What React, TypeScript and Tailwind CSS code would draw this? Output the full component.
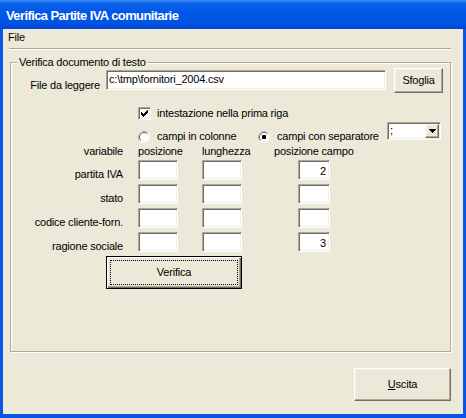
import React from "react";

const sunken =
  "border border-t-[#aca899] border-l-[#aca899] border-r-white border-b-white shadow-[inset_1px_1px_0_#716f64,inset_-1px_-1px_0_#f1efe2] bg-white";
const raised =
  "border border-t-white border-l-white border-r-[#716f64] border-b-[#716f64] shadow-[inset_-1px_-1px_0_#aca899,inset_1px_1px_0_#f1efe2] bg-[#ece9d8]";

function Check() {
  const cols: [number, number][] = [
    [3, 5],
    [4, 6],
    [5, 7],
    [6, 6],
    [7, 5],
    [8, 4],
    [9, 3],
  ];
  return (
    <div className={`w-[13px] h-[13px] ${sunken}`}>
      <svg width="11" height="11" viewBox="0 0 11 11" shapeRendering="crispEdges">
        {cols.map(([x, y]) => (
          <rect key={x} x={x - 1} y={y - 1} width="1" height="3" fill="#000" />
        ))}
      </svg>
    </div>
  );
}

function Radio({ checked }: { checked?: boolean }) {
  return (
    <svg width="12" height="12" viewBox="0 0 12 12" className="shrink-0">
      <circle cx="6" cy="6" r="5.5" fill="#fff" stroke="#fff" />
      <path d="M2.11 9.89 A5.5 5.5 0 0 1 9.89 2.11" fill="none" stroke="#aca899" />
      <circle cx="6" cy="6" r="4.5" fill="#fff" stroke="#f1efe2" />
      <path d="M2.82 9.18 A4.5 4.5 0 0 1 9.18 2.82" fill="none" stroke="#716f64" />
      {checked && <rect x="4" y="4" width="4" height="4" rx="0.8" fill="#000" />}
    </svg>
  );
}

function Row({ label, value }: { label: string; value?: string }) {
  return (
    <div className="flex items-start h-[20px]">
      <div className="w-[112px] text-right mt-[8px] whitespace-nowrap">{label}</div>
      <div className={`ml-[15px] w-[40px] h-[20px] ${sunken}`}></div>
      <div className={`ml-[24px] w-[40px] h-[20px] ${sunken}`}></div>
      <div className={`ml-[56px] w-[32px] h-[20px] ${sunken} text-right pt-[4px] pr-[3px]`}>{value}</div>
    </div>
  );
}

export default function App() {
  return (
    <div className="w-[466px] h-[418px] flex flex-col bg-[#0a55e6] overflow-hidden font-['Liberation_Sans',Arial,sans-serif] text-[11px] leading-[13px] tracking-[-0.2px] text-black">
      <div className="h-[29px] shrink-0 flex items-center pl-[6px] pt-[2px] bg-[linear-gradient(180deg,#3d8ff6_0%,#0a62ec_12%,#0057e7_45%,#0055e5_78%,#0045d0_100%)] text-white font-bold text-[13px] tracking-[-0.6px] whitespace-nowrap">
        Verifica Partite IVA comunitarie
      </div>
      <div className="flex-1 mx-[3px] mb-[4px] bg-[#ece9d8] flex flex-col">
        <div className="h-[19px] flex items-center pl-[5px] pb-[2px]">File</div>
        <div className="ml-[6px] mr-[12px] border-t border-t-[#aca899] border-b border-b-white"></div>

        <div className="relative mt-[12px] ml-[7px] w-[441px] h-[290px] border border-[#aca899] shadow-[1px_1px_0_#fff,inset_1px_1px_0_#fff] flex flex-col">
          <div className="absolute left-[6px] top-[-7px] px-[2px] bg-[#ece9d8] whitespace-nowrap">
            Verifica documento di testo
          </div>

          <div className="mt-[5px] flex items-start h-[25px]">
            <div className="w-[89px] text-right mt-[11px] whitespace-nowrap">File da leggere</div>
            <div className={`ml-[6px] mt-[2px] w-[280px] h-[20px] ${sunken} pt-[2px] pl-[2px] whitespace-nowrap`}>
              {"c:\\tmp\\fornitori_2004.csv"}
            </div>
            <div className={`ml-[8px] w-[49px] h-[25px] ${raised} flex items-center justify-center`}>Sfoglia</div>
          </div>

          <div className="mt-[14px] flex items-center h-[13px] pl-[127px]">
            <Check />
            <div className="ml-[6px] whitespace-nowrap">intestazione nella prima riga</div>
          </div>

          <div className="mt-[2px] flex items-start h-[20px] pl-[127px]">
            <div className="w-[120px] mt-[8px] h-[13px] flex items-center">
              <Radio />
              <div className="ml-[7px] whitespace-nowrap">campi in colonne</div>
            </div>
            <div className="w-[129px] mt-[8px] h-[13px] flex items-center">
              <Radio checked />
              <div className="ml-[7px] whitespace-nowrap">campi con separatore</div>
            </div>
            <div className={`w-[54px] h-[18px] ${sunken} flex p-[1px]`}>
              <div className="flex-1 pl-[1px] overflow-hidden">;</div>
              <div className={`w-[14px] h-full ${raised} flex items-center justify-center`}>
                <svg width="7" height="4" viewBox="0 0 7 4" shapeRendering="crispEdges">
                  <rect x="0" y="0" width="7" height="1" fill="#000" />
                  <rect x="1" y="1" width="5" height="1" fill="#000" />
                  <rect x="2" y="2" width="3" height="1" fill="#000" />
                  <rect x="3" y="3" width="1" height="1" fill="#000" />
                </svg>
              </div>
            </div>
          </div>

          <div className="mt-[3px] flex h-[13px] whitespace-nowrap">
            <div className="w-[112px] text-right">variabile</div>
            <div className="ml-[15px] w-[64px]">posizione</div>
            <div className="w-[72px]">lunghezza</div>
            <div>posizione campo</div>
          </div>

          <div className="mt-[2px] flex flex-col gap-[4px]">
            <Row label="partita IVA" value="2" />
            <Row label="stato" />
            <Row label="codice cliente-forn." />
            <Row label="ragione sociale" value="3" />
          </div>

          <div className="mt-[4px] ml-[95px] w-[136px] h-[33px] border border-black shadow-[inset_1px_1px_0_#fff,inset_-1px_-1px_0_#716f64,inset_-2px_-2px_0_#aca899] p-[3px] flex">
            <div className="flex-1 border border-dotted border-black flex items-center justify-center">Verifica</div>
          </div>
        </div>

        <div className={`mt-[16px] mr-[12px] self-end w-[97px] h-[33px] ${raised} flex items-center justify-center`}>
          <span>
            <span className="underline underline-offset-[1px]">U</span>scita
          </span>
        </div>
      </div>
    </div>
  );
}
